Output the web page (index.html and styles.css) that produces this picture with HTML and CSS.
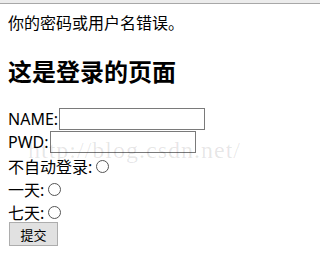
FILE: index.html
```html
<!DOCTYPE html>
<html>
<head>
<meta charset="utf-8">
<link rel="stylesheet" href="styles.css">
</head>
<body>
<div class="topbar"></div>
<div class="page">
  <div class="msg">你的密码或用户名错误。</div>
  <h2 class="title">这是登录的页面</h2>
  <form class="login">
    <div class="row">NAME:<input class="field" type="text"></div>
    <div class="row">PWD:<input class="field" type="password"></div>
    <div class="row">不自动登录: <input class="radio" type="radio" name="keep"></div>
    <div class="row">一天: <input class="radio" type="radio" name="keep"></div>
    <div class="row">七天: <input class="radio" type="radio" name="keep"></div>
    <div class="row"><button class="submit" type="submit">提交</button></div>
  </form>
</div>
<div class="watermark">http://blog.csdn.net/</div>
</body>
</html>
```
FILE: styles.css
```css
html, body {
  margin: 0;
  padding: 0;
  background: #fff;
}
body {
  font-family: "Noto Sans", "Noto Sans CJK SC", sans-serif;
  font-size: 16px;
  color: #000;
  position: relative;
  overflow: hidden;
  height: 278px;
}
.topbar {
  height: 3px;
  background: #ececec;
  border-bottom: 1px solid #a8a8a8;
}
.page {
  padding: 8px;
}
.msg {
  line-height: 22px;
}
.title {
  font-size: 24px;
  font-weight: bold;
  margin: 22px 0 19px;
  line-height: 32px;
}
.login {
  display: flex;
  flex-direction: column;
}
.row {
  display: flex;
  align-items: center;
  height: 23px;
}
.row:nth-child(3) {
  margin-top: 1px;
}
.field {
  box-sizing: border-box;
  width: 146px;
  height: 22px;
  margin: 0 0 0 1px;
  border: 1px solid #7a7a7a;
  padding: 0;
  background: #fff;
}
.radio {
  appearance: none;
  -webkit-appearance: none;
  box-sizing: border-box;
  width: 13px;
  height: 13px;
  border: 1px solid #555;
  border-radius: 50%;
  margin: 2px 0 0 4px;
  background: #fff;
}
.submit {
  font-family: "Noto Sans", "Noto Sans CJK SC", sans-serif;
  font-size: 13px;
  width: 49px;
  height: 24px;
  margin: -1px 0 0 1px;
  background: #e1e1e1;
  border: 1px solid #adadad;
  padding: 0;
  color: #000;
}
.watermark {
  position: absolute;
  left: 28px;
  top: 137px;
  font-family: "Liberation Serif", serif;
  font-size: 24px;
  letter-spacing: 1px;
  color: rgba(0, 0, 0, 0.1);
  pointer-events: none;
}
```
